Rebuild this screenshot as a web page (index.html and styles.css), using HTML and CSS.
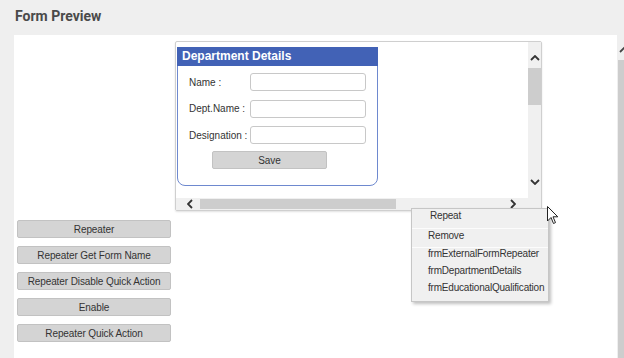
FILE: index.html
```html
<!DOCTYPE html>
<html lang="en">
<head>
  <meta charset="UTF-8">
  <meta name="viewport" content="width=device-width, initial-scale=1.0">
  <title>Form Preview</title>
  <link rel="stylesheet" href="styles.css">
</head>
<body>

  <h1 class="page-title">Form Preview</h1>

  <div class="workspace">
    <div class="panel">

      <!-- preview frame -->
      <div class="preview-frame">
        <div class="frame-body">
          <div class="frame-view">
            <div class="dept-card">
              <div class="dept-header">Department Details</div>
              <div class="dept-body">
                <div class="dept-form">
                  <label>Name :</label>
                  <input type="text">
                  <label>Dept.Name :</label>
                  <input type="text">
                  <label>Designation :</label>
                  <input type="text">
                </div>
                <button class="btn save-btn">Save</button>
              </div>
            </div>
          </div>
          <div class="vscroll">
            <div class="vscroll-up">
              <svg width="10" height="6" viewBox="0 0 10 6"><path d="M1 5 L5 1 L9 5" fill="none" stroke="#333" stroke-width="1.8"/></svg>
            </div>
            <div class="vscroll-thumb"></div>
            <div class="vscroll-track"></div>
            <div class="vscroll-down">
              <svg width="10" height="6" viewBox="0 0 10 6"><path d="M1 1 L5 5 L9 1" fill="none" stroke="#333" stroke-width="1.8"/></svg>
            </div>
          </div>
        </div>
        <div class="hscroll">
          <div class="hscroll-left">
            <svg width="6" height="10" viewBox="0 0 6 10"><path d="M5 1 L1 5 L5 9" fill="none" stroke="#333" stroke-width="1.8"/></svg>
          </div>
          <div class="hscroll-thumb"></div>
          <div class="hscroll-track"></div>
          <div class="hscroll-right">
            <svg width="6" height="10" viewBox="0 0 6 10"><path d="M1 1 L5 5 L1 9" fill="none" stroke="#333" stroke-width="1.8"/></svg>
          </div>
          <div class="hscroll-corner"></div>
        </div>
      </div>

      <!-- action buttons -->
      <div class="actions">
        <button class="btn">Repeater</button>
        <button class="btn">Repeater Get Form Name</button>
        <button class="btn">Repeater Disable Quick Action</button>
        <button class="btn">Enable</button>
        <button class="btn">Repeater Quick Action</button>
      </div>

    </div>
    <div class="page-scroll">
      <div class="page-scroll-up">
        <svg width="12" height="8" viewBox="0 0 12 8"><path d="M2 6 L6 2 L10 6" fill="none" stroke="#444" stroke-width="1.8"/></svg>
      </div>
      <div class="page-scroll-thumb"></div>
    </div>
  </div>

  <!-- context menu -->
  <ul class="context-menu">
    <li class="menu-item menu-first">Repeat</li>
    <li class="menu-item menu-second">Remove</li>
    <li class="menu-item">frmExternalFormRepeater</li>
    <li class="menu-item">frmDepartmentDetails</li>
    <li class="menu-item">frmEducationalQualification</li>
  </ul>

  <svg class="cursor" width="12" height="19" viewBox="0 0 12 19">
    <path d="M0.5 0.5 L0.5 15 L4 11.5 L6.5 17.5 L8.5 16.6 L6 10.8 L10.8 10.8 Z" fill="#fff" stroke="#222" stroke-width="1"/>
  </svg>

</body>
</html>
```

FILE: styles.css
```css
html, body {
  margin: 0;
  height: 358px;
  overflow: hidden;
}
body {
  background: #efefef;
  font-family: "Liberation Sans", Arial, sans-serif;
  font-size: 10px;
  color: #333;
  position: relative;
}
.page-title {
  margin: 0;
  padding: 8px 0 11px 15px;
  font-family: Roboto, "Liberation Sans", sans-serif;
  font-size: 14px;
  line-height: 16px;
  font-weight: 700;
  color: #4a4a4a;
}
.workspace {
  display: flex;
  height: 323px;
}
.panel {
  width: 603px;
  margin-left: 14px;
  background: #fff;
  padding-top: 6px;
  box-sizing: border-box;
}
.page-scroll {
  width: 6px;
  margin-left: 1px;
  overflow: hidden;
  display: flex;
  flex-direction: column;
}
.page-scroll-up {
  height: 25px;
  padding-top: 11px;
  box-sizing: border-box;
}
.page-scroll-up svg {
  display: block;
}
.page-scroll-thumb {
  flex: 1;
  background: #cdcdcd;
}

/* preview frame */
.preview-frame {
  margin-left: 161px;
  width: 367px;
  height: 170px;
  border: 1px solid #cfcfcf;
  border-radius: 2px;
  box-sizing: border-box;
  box-shadow: 0 1px 2px rgba(0,0,0,0.12);
  display: flex;
  flex-direction: column;
}
.frame-body {
  display: flex;
  height: 156px;
}
.frame-view {
  flex: 1;
  padding: 5px 0 0 1px;
}
.vscroll {
  width: 13px;
  background: #f0f0f0;
  display: flex;
  flex-direction: column;
}
.vscroll-up {
  height: 26px;
  padding-top: 13px;
  box-sizing: border-box;
  text-align: center;
}
.vscroll-down {
  height: 26px;
  padding-top: 7px;
  box-sizing: border-box;
  text-align: center;
}
.vscroll svg, .hscroll svg {
  display: block;
  margin: 0 auto;
}
.vscroll-thumb {
  height: 37px;
  background: #cdcdcd;
}
.vscroll-track {
  flex: 1;
}
.hscroll {
  height: 12px;
  background: #f0f0f0;
  display: flex;
  align-items: center;
}
.hscroll-left {
  width: 24px;
  padding-left: 11px;
  box-sizing: border-box;
}
.hscroll-left svg, .hscroll-right svg {
  margin: 0;
}
.hscroll-thumb {
  width: 196px;
  height: 10px;
  background: #cdcdcd;
}
.hscroll-track {
  flex: 1;
}
.hscroll-right {
  width: 24px;
  padding-left: 6px;
  box-sizing: border-box;
}
.hscroll-corner {
  width: 13px;
}

/* department card */
.dept-card {
  width: 201px;
  height: 139px;
  border: 1px solid #6e89cf;
  border-radius: 0 0 8px 8px;
  box-sizing: border-box;
}
.dept-header {
  margin: -1px -1px 0;
  height: 19px;
  line-height: 19px;
  padding-left: 5px;
  background: #4262b6;
  color: #fff;
  font-size: 12px;
  font-weight: bold;
}
.dept-body {
  padding: 7px 0 0 11px;
}
.dept-form {
  display: grid;
  grid-template-columns: 61px 116px;
  grid-auto-rows: 18px;
  row-gap: 8.5px;
  align-items: center;
}
.dept-form label {
  font-size: 10px;
  color: #333;
}
.dept-form input {
  width: 116px;
  height: 18px;
  margin: 0;
  padding: 0 4px;
  border: 1px solid #c8c8c8;
  border-radius: 3px;
  box-sizing: border-box;
  background: #fff;
}
.btn {
  display: block;
  width: 154px;
  height: 18px;
  margin: 0;
  padding: 0;
  background: #d4d4d4;
  border: 1px solid #c2c2c2;
  border-radius: 2px;
  font-family: "Liberation Sans", Arial, sans-serif;
  font-size: 10px;
  letter-spacing: -0.1px;
  color: #333;
  cursor: pointer;
}
.save-btn {
  width: 115px;
  margin: 7px 0 0 23px;
}

/* action buttons */
.actions {
  margin: 9px 0 0 3px;
  display: flex;
  flex-direction: column;
  gap: 8px;
}

/* context menu */
.context-menu {
  position: absolute;
  left: 411px;
  top: 208px;
  width: 138px;
  margin: 0;
  padding: 0 0 3px;
  list-style: none;
  background: #f0f0f0;
  border: 1px solid #c6c6c6;
  box-sizing: border-box;
  box-shadow: 2px 2px 3px rgba(0,0,0,0.25);
}
.menu-item {
  padding: 0 0 3px 16px;
  line-height: 14px;
  font-size: 10px;
  letter-spacing: -0.2px;
  color: #333;
}
.menu-first {
  padding: 0 0 5px 18px;
  border-bottom: 1px solid #fcfcfc;
}
.menu-second {
  padding: 0 0 4px 16px;
  border-bottom: 1px solid #fcfcfc;
}
.menu-second + .menu-item {
  margin-top: -1px;
}
.cursor {
  position: absolute;
  left: 547px;
  top: 206px;
}
```
